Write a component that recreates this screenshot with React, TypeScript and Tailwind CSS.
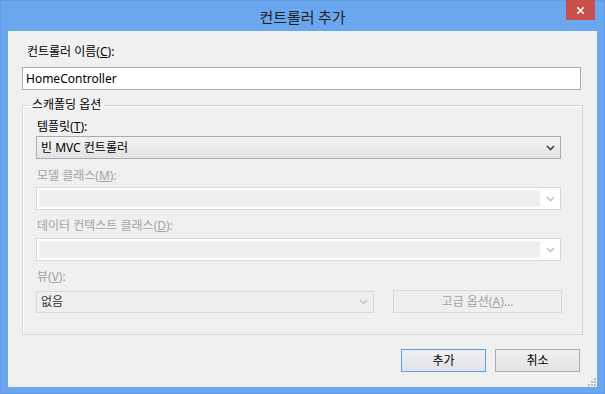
import { X } from 'lucide-react'

const Chevron = ({ color }: { color: string }) => (
  <svg width="9" height="6" viewBox="0 0 9 6" className="shrink-0">
    <path d="M1 1 L4.5 4.5 L8 1" fill="none" stroke={color} strokeWidth="1.6" />
  </svg>
)

const DisabledCombo = () => (
  <div className="flex w-[525px] h-[23px] border border-[#d9d9d9] bg-white p-[2px]">
    <div className="flex-1 bg-[#efefef]" />
    <div className="w-[18px] flex items-center justify-center pl-[2px]">
      <Chevron color="#c4c4c4" />
    </div>
  </div>
)

export default function App() {
  return (
    <div className="w-[605px] h-[394px] bg-[#6aa7ef] border border-[#5f9ae3] flex flex-col font-['Noto_Sans','Noto_Sans_CJK_KR',sans-serif] text-[12px] text-black">
      {/* Title bar */}
      <div className="relative h-[30px] shrink-0">
        <div className="text-center text-[15px] leading-[32px] text-[#1f1f1f] font-['Noto_Sans_CJK_KR',sans-serif]">컨트롤러 추가</div>
        <div className="absolute right-[9px] -top-px w-[29px] h-[20px] bg-[#c7504a] flex items-center justify-center">
          <X className="w-[11px] h-[11px] text-white" strokeWidth={3.5} />
        </div>
      </div>

      {/* Client area */}
      <div className="relative mx-[7px] h-[356px] bg-[#f0f0f0] pt-[13px] pl-[14px]">
        <div className="pl-[5px] h-[16px] leading-[16px]">
          컨트롤러 이름(<span className="underline">C</span>):
        </div>
        <div className="mt-[7px] w-[559px] h-[23px] border border-[#ababab] bg-white pl-[3px] flex items-center">
          HomeController
        </div>

        {/* Scaffolding options group */}
        <fieldset className="mt-[7px] w-[561px] border border-[#d5d5d5] shadow-[inset_1px_1px_0_#fff]">
          <legend className="ml-[6px] px-[3px] h-[16px] leading-[16px]">스캐폴딩 옵션</legend>
          <div className="pt-[6px] pl-[13px] pb-[21px]">
            <div className="pl-px h-[16px] leading-[16px]">
              템플릿(<span className="underline">T</span>):
            </div>
            <div className="mt-px w-[525px] h-[23px] border border-[#acacac] bg-gradient-to-b from-[#f3f3f3] to-[#e3e3e3] flex items-center pl-[4px] pr-[5px]">
              <span className="flex-1">빈 MVC 컨트롤러</span>
              <Chevron color="#404040" />
            </div>

            <div className="mt-[9px] pl-px h-[16px] leading-[16px] text-[#a3a3a3]">
              모델 클래스(<span className="underline">M</span>):
            </div>
            <div className="mt-[3px]">
              <DisabledCombo />
            </div>

            <div className="mt-[8px] pl-px h-[16px] leading-[16px] text-[#a3a3a3]">
              데이터 컨텍스트 클래스(<span className="underline">D</span>):
            </div>
            <div className="mt-[4px]">
              <DisabledCombo />
            </div>

            <div className="mt-[8px] pl-px h-[16px] leading-[16px] text-[#a3a3a3]">
              뷰(<span className="underline">V</span>):
            </div>
            <div className="mt-[5px] flex items-start gap-[19px]">
              <div className="mt-px w-[338px] h-[22px] border border-[#d9d9d9] bg-[#efefef] flex items-center pl-[4px] pr-[5px]">
                <span className="flex-1 text-[#333]">없음</span>
                <Chevron color="#c4c4c4" />
              </div>
              <div className="w-[169px] h-[23px] border border-[#d9d9d9] bg-[#efefef] flex items-center justify-center text-[#a3a3a3]">
                고급 옵션(<span className="underline">A</span>)...
              </div>
            </div>
          </div>
        </fieldset>

        {/* Dialog buttons */}
        <div className="mt-[14px] w-[561px] pr-[3px] flex justify-end gap-[9px]">
          <div className="w-[85px] h-[23px] border border-[#5b9ee3] bg-gradient-to-b from-[#eef0f2] to-[#e1e3e6] flex items-center justify-center">
            추가
          </div>
          <div className="w-[85px] h-[23px] border border-[#acacac] bg-gradient-to-b from-[#f0f0f0] to-[#e3e3e3] flex items-center justify-center">
            취소
          </div>
        </div>

        {/* Resize grip */}
        <svg width="9" height="9" viewBox="0 0 9 9" className="absolute right-[1px] bottom-[1px]">
          {[[7, 1], [4, 4], [7, 4], [1, 7], [4, 7], [7, 7]].map(([x, y]) => (
            <rect key={`${x}-${y}`} x={x} y={y} width="2" height="2" fill="#b8b8b8" />
          ))}
        </svg>
      </div>
    </div>
  )
}
